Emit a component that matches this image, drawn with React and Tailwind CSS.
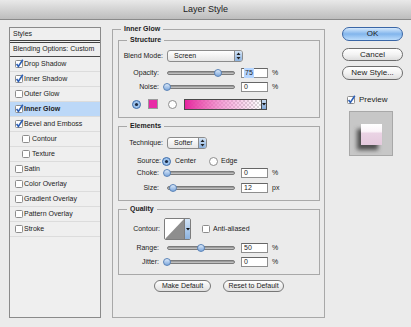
import React from 'react';

const styles = [
    { label: 'Drop Shadow', on: true },
    { label: 'Inner Shadow', on: true },
    { label: 'Outer Glow' },
    { label: 'Inner Glow', on: true, active: true },
    { label: 'Bevel and Emboss', on: true },
    { label: 'Contour', sub: true },
    { label: 'Texture', sub: true },
    { label: 'Satin' },
    { label: 'Color Overlay' },
    { label: 'Gradient Overlay' },
    { label: 'Pattern Overlay' },
    { label: 'Stroke' },
];

const Check = ({ on }) => (
    <svg width="8" height="8" viewBox="0 0 8 8" className="shrink-0 overflow-visible">
        <rect x="0.5" y="0.5" width="7" height="7" rx="1" fill="#fff" stroke="#8c8c8c" />
        {on && <path d="M1.6 4 L3.4 6.4 L7.8 -0.2" fill="none" stroke="#2c5fb6" strokeWidth="1.6" />}
    </svg>
);

const Radio = ({ on }) => (
    <svg width="9" height="9" viewBox="0 0 9 9" className="shrink-0">
        <circle cx="4.5" cy="4.5" r="4" fill={on ? '#9cc2ec' : '#fff'} stroke={on ? '#3f6ca8' : '#8c8c8c'} />
        {on && <circle cx="4.5" cy="4.5" r="1.6" fill="#1c2b44" />}
    </svg>
);

const Arrows = () => (
    <svg width="5" height="8" viewBox="0 0 5 8">
        <path d="M2.5 0.5 L4.5 3 H0.5Z M2.5 7.5 L4.5 5 H0.5Z" fill="#222" />
    </svg>
);

const DownArrow = () => (
    <svg width="4" height="4" viewBox="0 0 4 4">
        <path d="M0 1 H4 L2 3.5Z" fill="#111" />
    </svg>
);

const Popup = ({ label, width }) => (
    <div className={`ml-[4px] flex h-[12px] items-center overflow-hidden rounded-[3px] border border-[#8c8c8c] bg-linear-to-b from-white to-[#e6e6e6] ${width}`}>
        <span className="flex-1 pl-[6px]">{label}</span>
        <div className="flex h-full w-[8px] items-center justify-center border-l border-[#8c8c8c] bg-linear-to-b from-[#d3e4f6] to-[#8cb2df]">
            <Arrows />
        </div>
    </div>
);

const Slider = ({ pos }) => (
    <div className="relative ml-[8px] flex h-[10px] w-[68px] items-center">
        <div className="h-[4px] w-full rounded-full border border-[#7b7b7b] bg-linear-to-b from-[#8d8d8d] to-[#cfcfcf]" />
        <div
            className="absolute top-[1px] h-[8px] w-[8px] -translate-x-1/2 rounded-full border border-[#5a83b8] bg-linear-to-b from-[#dbe9f9] to-[#7ea8dc]"
            style={{ left: `${pos}%` }}
        />
    </div>
);

const Field = ({ value, sel, unit }) => (
    <>
        <div className="ml-[6px] flex h-[10px] w-[27px] items-center border border-[#8e8e8e] border-t-[#666] bg-white pl-[2px]">
            <span className={sel ? 'bg-[#b5d5ff] px-[1px]' : ''}>{value}</span>
        </div>
        <span className="ml-[4px]">{unit}</span>
    </>
);

const SliderRow = ({ label, pos, value, sel, unit, className }) => (
    <div className={`flex h-[12px] items-center ${className}`}>
        <span className="w-[40px] text-right">{label}</span>
        <Slider pos={pos} />
        <Field value={value} sel={sel} unit={unit} />
    </div>
);

const Group = ({ title, className, children }) => (
    <fieldset className={`border border-[#a8a8a8] ${className}`}>
        <legend className="ml-[8px] px-[3px] text-[7px] leading-[10px] font-bold">{title}</legend>
        {children}
    </fieldset>
);

const Pill = ({ children, className }) => (
    <div className={`flex items-center justify-center rounded-full border ${className}`}>{children}</div>
);

export default function App() {
    return (
        <div className="h-[327px] w-[411px] overflow-hidden bg-[#ebebeb] font-['Liberation_Sans',Arial,sans-serif] text-[7px] text-[#1c1c1c]">
            {/* title bar */}
            <div className="flex h-[20px] items-center justify-center border-b border-[#8a8a8a] bg-linear-to-b from-[#e9e9e9] to-[#bdbdbd] text-[9px] text-[#222]">
                Layer Style
            </div>

            <div className="flex items-start pl-[9px] pt-[4px]">
                {/* styles list */}
                <div className="mt-[3px] h-[291px] w-[92px] border border-[#8a8a8a] bg-[#efefef]">
                    <div className="flex h-[15px] items-center border-b-[3px] border-double border-[#3f3f3f] pl-[3px]">Styles</div>
                    <div className="flex h-[14px] items-center border-b border-[#4a4a4a] pl-[3px]">Blending Options: Custom</div>
                    {styles.map((s, i) => (
                        <div
                            key={i}
                            className={`flex h-[15px] items-center border-b border-[#dcdcdc] ${s.sub ? 'pl-[12px]' : 'pl-[5px]'} ${s.active ? 'bg-[#bcd8f8] font-bold' : ''}`}
                        >
                            <Check on={s.on} />
                            <span className={s.sub ? 'ml-[2px]' : 'ml-[1px]'}>{s.label}</span>
                        </div>
                    ))}
                </div>

                {/* settings */}
                <Group title="Inner Glow" className="ml-[11px] h-[294px] w-[213px]">
                    <div className="pl-[5px] pr-[4px] pt-[1px]">
                        <Group title="Structure" className="w-full pb-[5px]">
                            <div className="mt-[4px] flex h-[14px] items-center">
                                <span className="w-[44px] text-right">Blend Mode:</span>
                                <Popup label="Screen" width="w-[76px]" />
                            </div>
                            <SliderRow label="Opacity:" pos={75} value="75" sel unit="%" className="mt-[3px] h-[14px]" />
                            <SliderRow label="Noise:" pos={0} value="0" unit="%" className="h-[14px]" />
                            <div className="mt-[2px] flex h-[16px] items-center">
                                <span className="ml-[13px]"><Radio on /></span>
                                <div className="ml-[7px] h-[10px] w-[10px] border border-[#9a9a9a] bg-[#e82aa6]" />
                                <span className="ml-[10px]"><Radio /></span>
                                <div className="ml-[7px] flex h-[11px] w-[83px] border border-[#4a4a4a]">
                                    <div className="h-full flex-1 bg-[image:repeating-conic-gradient(#d6d6d6_0_25%,#ffffff_0_50%)] bg-[length:4px_4px]">
                                        <div className="h-full w-full bg-linear-to-r from-[#e5239f] via-[#ef7ec7]/70 to-[#ffffff]/0" />
                                    </div>
                                    <div className="flex w-[5px] items-center justify-center border-l border-[#4a4a4a] bg-linear-to-b from-[#c9dcf2] to-[#7fa7d8]">
                                        <DownArrow />
                                    </div>
                                </div>
                            </div>
                        </Group>

                        <Group title="Elements" className="mt-[3px] w-full pb-[6px]">
                            <div className="mt-[5px] flex h-[14px] items-center">
                                <span className="w-[44px] text-right">Technique:</span>
                                <Popup label="Softer" width="w-[40px]" />
                            </div>
                            <div className="mt-[5px] flex h-[12px] items-center">
                                <span className="w-[42px] text-right">Source:</span>
                                <span className="ml-[1px]"><Radio on /></span>
                                <span className="ml-[4px]">Center</span>
                                <span className="ml-[13px]"><Radio /></span>
                                <span className="ml-[3px]">Edge</span>
                            </div>
                            <SliderRow label="Choke:" pos={0} value="0" unit="%" />
                            <SliderRow label="Size:" pos={9} value="12" unit="px" className="mt-[3px]" />
                        </Group>

                        <Group title="Quality" className="mt-[3px] w-full pb-[6px]">
                            <div className="mt-[4px] flex h-[22px] items-center">
                                <span className="w-[41px] text-right">Contour:</span>
                                <div className="ml-[4px] flex h-[22px] w-[27px] overflow-hidden rounded-[2px] border border-[#7d7d7d]">
                                    <svg width="19" height="20" viewBox="0 0 19 20">
                                        <rect width="19" height="20" fill="#fff" />
                                        <path d="M0 20 L19 0 L19 20Z" fill="#8e8e8e" />
                                    </svg>
                                    <div className="flex flex-1 items-center justify-center border-l border-[#7d7d7d] bg-linear-to-b from-[#d3e4f6] to-[#8cb2df]">
                                        <DownArrow />
                                    </div>
                                </div>
                                <span className="ml-[11px]"><Check /></span>
                                <span className="ml-[3px]">Anti-aliased</span>
                            </div>
                            <SliderRow label="Range:" pos={50} value="50" unit="%" className="mt-[2px]" />
                            <SliderRow label="Jitter:" pos={0} value="0" unit="%" className="mt-[2px]" />
                        </Group>

                        <div className="mt-[5px] flex justify-center gap-[12px]">
                            <Pill className="h-[12px] w-[57px] border-[#777] bg-linear-to-b from-white to-[#e0e0e0]">Make Default</Pill>
                            <Pill className="h-[12px] w-[61px] border-[#777] bg-linear-to-b from-white to-[#e0e0e0]">Reset to Default</Pill>
                        </div>
                    </div>
                </Group>

                {/* buttons */}
                <div className="ml-[17px] mt-[3px] flex w-[61px] flex-col text-[8px]">
                    <Pill className="h-[14px] border-[#3a66a6] bg-linear-to-b from-[#d6e9fc] via-[#82b5ec] to-[#bcdcfb]">OK</Pill>
                    <Pill className="mt-[7px] h-[13px] border-[#6d6d6d] bg-linear-to-b from-white via-[#f3f3f3] to-[#dedede]">Cancel</Pill>
                    <Pill className="mt-[5px] h-[14px] border-[#6d6d6d] bg-linear-to-b from-white via-[#f3f3f3] to-[#dedede]">New Style...</Pill>
                    <div className="mt-[14px] flex items-center pl-[5px]">
                        <Check on />
                        <span className="ml-[4px]">Preview</span>
                    </div>
                    <div className="ml-[7px] mt-[5px] h-[45px] w-[44px] border border-[#a8a8a8] bg-[#c7c7c7]">
                        <svg width="42" height="43" viewBox="0 0 42 43">
                            <defs>
                                <filter id="blur" x="-50%" y="-50%" width="200%" height="200%">
                                    <feGaussianBlur stdDeviation="2" />
                                </filter>
                                <linearGradient id="face" x1="0" y1="0" x2="0" y2="1">
                                    <stop offset="0" stopColor="#ffffff" />
                                    <stop offset="0.35" stopColor="#fbf4f9" />
                                    <stop offset="0.45" stopColor="#ead3e4" />
                                    <stop offset="1" stopColor="#e4cadd" />
                                </linearGradient>
                            </defs>
                            <rect x="7" y="17" width="21" height="21" fill="#4f4f4f" filter="url(#blur)" />
                            <rect x="11" y="12" width="21" height="21" fill="url(#face)" />
                        </svg>
                    </div>
                </div>
            </div>
        </div>
    );
}
